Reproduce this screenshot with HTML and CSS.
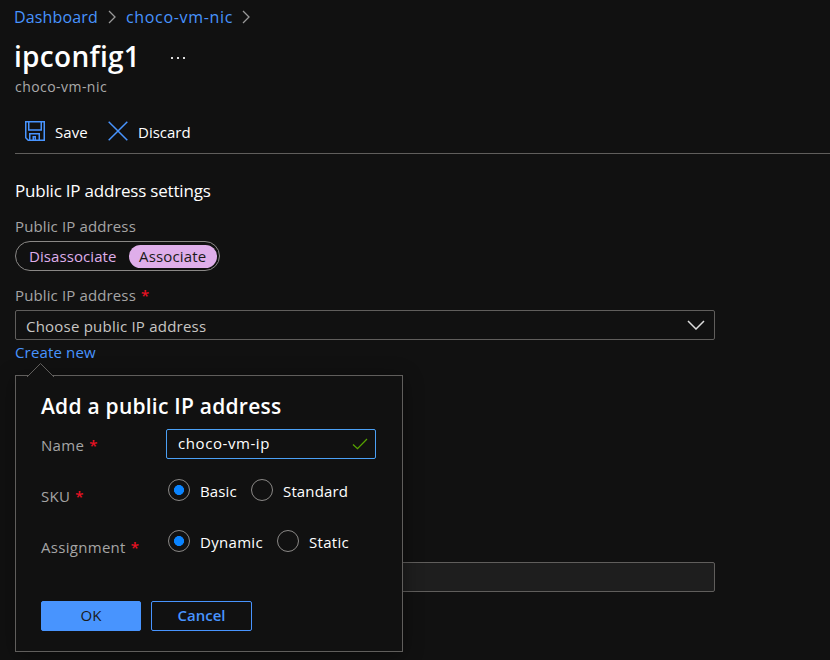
FILE: index.html
```
<!DOCTYPE html>
<html lang="en">
<head>
<meta charset="utf-8">
<title>ipconfig1</title>
<link rel="stylesheet" href="styles.css">
</head>
<body>
<nav class="breadcrumb">
  <a class="crumb crumb-first"><span>Dashboard</span></a>
  <svg class="sep" width="8" height="14" viewBox="0 0 8 14"><path d="M1 1l6 6-6 6"/></svg>
  <a class="crumb crumb-nic"><span>choco-vm-nic</span></a>
  <svg class="sep" width="8" height="14" viewBox="0 0 8 14"><path d="M1 1l6 6-6 6"/></svg>
</nav>
<header class="title-row">
  <h1><span>ipconfig1</span></h1>
  <svg class="more" width="14" height="2" viewBox="0 0 14 2"><path d="M0 0h2v2H0zM6 0h2v2H6zM12 0h2v2h-2z"/></svg>
</header>
<p class="subtitle"><span>choco-vm-nic</span></p>
<div class="toolbar">
  <svg class="icon" width="20" height="20" viewBox="0 0 20 20"><path d="M.75.75h18.5v18.5H3.2L.75 16.8zM3.75 1v8h12.5V1M4.75 19v-6.2h9.5V19M8.25 19v-3.2h2V19"/></svg>
  <span class="tool save">Save</span>
  <svg class="icon" width="20" height="20" viewBox="0 0 20 20"><path d="M.7.7l18.6 18.6M19.3.7L.7 19.3"/></svg>
  <span class="tool discard">Discard</span>
</div>
<main>
  <h2><span>Public IP address settings</span></h2>
  <div class="label"><span>Public IP address</span></div>
  <div class="toggle"><span class="opt off">Disassociate</span><span class="opt on"><span>Associate</span></span></div>
  <div class="label label-req"><span>Public IP address</span><b class="req">*</b></div>
  <div class="select"><span class="choose">Choose public IP address</span><svg width="18" height="10" viewBox="0 0 18 10"><path d="M1 1l8 8 8-8"/></svg></div>
  <div class="create"><a>Create new</a></div>
  <div class="lower">
    <div class="disabled-field"></div>
    <section class="popup">
      <svg class="beak" width="30" height="15" viewBox="0 0 30 15"><path d="M1 15L14.5 1.5 28 15" /></svg>
      <h3><span>Add a public IP address</span></h3>
      <div class="row row-name"><div class="rl"><span class="name">Name</span><b class="req">*</b></div>
        <div class="input"><span class="ip">choco-vm-ip</span><svg width="16" height="12" viewBox="0 0 16 12"><path d="M1 6.5l4.5 4.2L15 1"/></svg></div></div>
      <div class="row row-sku"><div class="rl"><span class="sku">SKU</span><b class="req">*</b></div>
        <i class="radio sel"></i><span class="rt basic">Basic</span><i class="radio"></i><span class="rt standard">Standard</span></div>
      <div class="row row-asg"><div class="rl"><span class="asg">Assignment</span><b class="req">*</b></div>
        <i class="radio sel"></i><span class="rt dynamic">Dynamic</span><i class="radio"></i><span class="rt static">Static</span></div>
      <div class="actions"><div class="btn ok"><span>OK</span></div><div class="btn cancel"><span>Cancel</span></div></div>
    </section>
  </div>
</main>
</body>
</html>
```
FILE: styles.css
```
* { box-sizing: border-box; }
body { margin: 0; height: 660px; overflow: hidden; background: #111; color: #fff; font: 15px/20px "Open Sans", "Noto Sans", sans-serif; }
h1, h2, h3, p { margin: 0; font-weight: 400; }
span, a { white-space: nowrap; }
svg { fill: none; flex: none; }
.breadcrumb { display: flex; align-items: center; height: 34px; padding-left: 14px; }
.crumb { color: #4894fe; font-size: 16px; letter-spacing: .15px; }
.crumb-first { width: 94px; }
.crumb-nic { width: 116px; margin-left: 10px; letter-spacing: .67px; }
.sep { stroke: #999; stroke-width: 1.3; }
.title-row { display: flex; align-items: center; height: 46px; padding-left: 14px; }
h1 { width: 157px; padding-bottom: 2px; font-size: 28px; font-weight: 600; line-height: 36px; letter-spacing: .3px; }
.more { margin-top: 2px; fill: #ddd; }
.subtitle { height: 32px; padding-left: 15px; font-size: 14px; line-height: 14px; letter-spacing: .45px; color: #aaa; }
.toolbar { display: flex; align-items: center; height: 42px; margin-left: 15px; padding: 0 0 2px 10px; border-bottom: 1px solid #605e5c; }
.icon { margin-bottom: 2px; stroke: #4894fe; stroke-width: 1.5; }
.tool { margin-left: 10px; }
.save { width: 53px; letter-spacing: .1px; }
main { padding-left: 15px; }
h2 { padding-top: 26px; height: 62px; font-size: 17px; line-height: 22px; letter-spacing: -.2px; }
.label { height: 25px; line-height: 20px; letter-spacing: .13px; color: #a5a5a5; }
.req { margin-left: 5px; color: #e81123; font-weight: 600; }
.toggle { display: flex; align-items: center; width: 205px; height: 30px; padding: 2px; border: 1px solid #8a8886; border-radius: 15px; color: #dfaeea; letter-spacing: .08px; }
.off { width: 111px; padding-left: 11px; }
.on { width: 88px; height: 23px; padding-left: 10px; border-radius: 12px; background: #dfaeea; color: #1b1a19; line-height: 23px; letter-spacing: .15px; }
.label-req { margin-top: 14px; }
.select { display: flex; align-items: center; justify-content: space-between; width: 700px; height: 30px; padding: 0 9px 0 10px; border: 1px solid #605e5c; border-radius: 2px; color: #c8c6c4; letter-spacing: .22px; }
.choose { padding-top: 2px; }
.select svg { stroke: #ddd; stroke-width: 1.5; }
.create { height: 35px; padding-top: 2px; color: #4894fe; letter-spacing: .15px; }
.lower { position: relative; padding-top: 187px; }
.disabled-field { width: 700px; height: 30px; border: 1px solid #605e5c; border-radius: 2px; background: #1e1e1e; }
.popup { position: absolute; left: 0; top: 0; width: 388px; height: 277px; padding: 17px 25px; border: 1px solid #605e5c; background: #111; box-shadow: 0 3px 18px rgba(0,0,0,.4); }
.beak { position: absolute; left: 10px; top: -14px; stroke: #605e5c; }
.beak path { fill: #111; }
h3 { height: 36px; font-size: 21px; font-weight: 600; line-height: 27px; letter-spacing: .24px; }
.row { display: flex; align-items: center; }
.row-name { height: 30px; }
.row-sku { height: 61px; padding-top: 1px; }
.row-asg { height: 41px; }
.rl { width: 125px; padding-top: 2px; color: #a5a5a5; letter-spacing: .3px; }
.row-sku .rl, .row-asg .rl { padding-top: 12px; }
.input { display: flex; align-items: center; justify-content: space-between; width: 210px; height: 30px; padding: 0 7px 0 11px; border: 1px solid #4ba0f5; border-radius: 2px; letter-spacing: .58px; }
.ip { padding-bottom: 2px; }
.input svg { stroke: #57a300; stroke-width: 1.3; }
.radio { width: 22px; height: 22px; border: 1px solid #8a8886; border-radius: 50%; }
.sel { margin-left: 2px; background: radial-gradient(circle, #0a84ff 4.7px, transparent 5.3px); }
.rt { margin-left: 10px; padding-top: 2px; letter-spacing: .15px; }
.basic { width: 51px; }
.dynamic { width: 77px; letter-spacing: .3px; }
.static { letter-spacing: .3px; }
.actions { display: flex; gap: 10px; margin-top: 40px; }
.btn { height: 30px; border: 1px solid #4894fe; border-radius: 2px; text-align: center; line-height: 26px; }
.ok { width: 100px; background: #4894fe; color: #1b1a19; }
.cancel { width: 101px; color: #4894fe; font-weight: 600; }
```
